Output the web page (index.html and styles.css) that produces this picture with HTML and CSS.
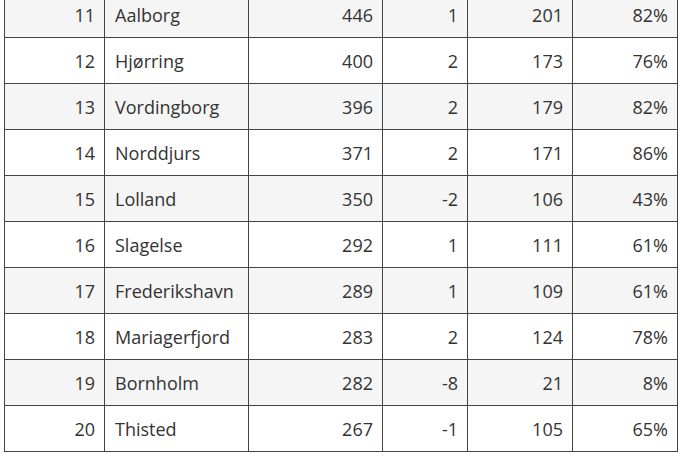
FILE: index.html
```html
<!DOCTYPE html>
<html>
<head>
<meta charset="utf-8">
<link rel="stylesheet" href="styles.css">
</head>
<body>
<table class="tbl">
<colgroup>
<col class="c1"><col class="c2"><col class="c3"><col class="c4"><col class="c5"><col class="c6">
</colgroup>
<tbody>
<tr><td class="num">11</td><td class="name">Aalborg</td><td class="num">446</td><td class="num">1</td><td class="num">201</td><td class="num">82%</td></tr>
<tr><td class="num">12</td><td class="name">Hjørring</td><td class="num">400</td><td class="num">2</td><td class="num">173</td><td class="num">76%</td></tr>
<tr><td class="num">13</td><td class="name">Vordingborg</td><td class="num">396</td><td class="num">2</td><td class="num">179</td><td class="num">82%</td></tr>
<tr><td class="num">14</td><td class="name">Norddjurs</td><td class="num">371</td><td class="num">2</td><td class="num">171</td><td class="num">86%</td></tr>
<tr><td class="num">15</td><td class="name">Lolland</td><td class="num">350</td><td class="num">-2</td><td class="num">106</td><td class="num">43%</td></tr>
<tr><td class="num">16</td><td class="name">Slagelse</td><td class="num">292</td><td class="num">1</td><td class="num">111</td><td class="num">61%</td></tr>
<tr><td class="num">17</td><td class="name">Frederikshavn</td><td class="num">289</td><td class="num">1</td><td class="num">109</td><td class="num">61%</td></tr>
<tr><td class="num">18</td><td class="name">Mariagerfjord</td><td class="num">283</td><td class="num">2</td><td class="num">124</td><td class="num">78%</td></tr>
<tr><td class="num">19</td><td class="name">Bornholm</td><td class="num">282</td><td class="num">-8</td><td class="num">21</td><td class="num">8%</td></tr>
<tr><td class="num">20</td><td class="name">Thisted</td><td class="num">267</td><td class="num">-1</td><td class="num">105</td><td class="num">65%</td></tr>
</tbody>
</table>
</body>
</html>
```
FILE: styles.css
```css
html, body {
  margin: 0;
  padding: 0;
  background: #ffffff;
}
body {
  padding-left: 4px;
  font-family: "Open Sans", "Liberation Sans", sans-serif;
  font-size: 18px;
  color: #333333;
}
.tbl {
  border-collapse: collapse;
  table-layout: fixed;
  width: 674px;
  margin-top: -9px;
}
.c1 { width: 100px; }
.c2 { width: 144px; }
.c3 { width: 134px; }
.c4 { width: 85px; }
.c5 { width: 105px; }
.c6 { width: 105px; }
.tbl td {
  border: 1px solid #444444;
  height: 46px;
  padding: 0 9px 0 10px;
  box-sizing: border-box;
  line-height: 20px;
  white-space: nowrap;
}
.tbl tr:nth-child(odd) td {
  background: #f5f5f5;
}
.num { text-align: right; }
.name { text-align: left; }
```
